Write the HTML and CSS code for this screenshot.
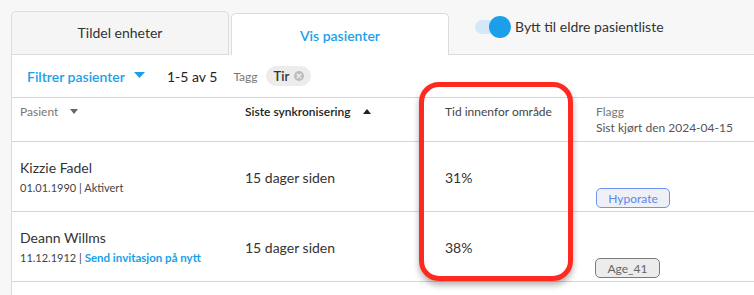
FILE: index.html
```html
<!DOCTYPE html>
<html lang="no">
<head>
<meta charset="utf-8">
<link rel="stylesheet" href="styles.css">
</head>
<body>
<div class="page">
  <div class="tabs">
    <div class="tab tab-idle">Tildel enheter</div>
    <div class="tab tab-active">Vis pasienter</div>
    <div class="tab-rest">
      <span class="toggle"><span class="track"></span><span class="knob"></span></span>
      <span class="toggle-label">Bytt til eldre pasientliste</span>
    </div>
  </div>
  <div class="panel">
    <div class="filters">
      <span class="filter-btn">Filtrer pasienter</span>
      <svg class="caret-blue" width="11" height="6" viewBox="0 0 11 6"><path d="M0 0H11L5.5 6Z" fill="#1a9fe8"/></svg>
      <span class="count">1-5 av 5</span>
      <span class="tag-label">Tagg</span>
      <span class="chip">Tir
        <svg class="chip-x" width="10" height="10" viewBox="0 0 10 10"><circle cx="5" cy="5" r="5" fill="#bdbdbd"/><path d="M3.2 3.2L6.8 6.8M6.8 3.2L3.2 6.8" stroke="#f2f2f2" stroke-width="1.4" stroke-linecap="round"/></svg>
      </span>
    </div>
    <div class="row head">
      <div class="cell h-gray">Pasient<svg class="sort" width="8" height="5" viewBox="0 0 8 5"><path d="M0 0H8L4 5Z" fill="#666"/></svg></div>
      <div class="cell h-bold">Siste synkronisering<svg class="sort" width="8" height="5" viewBox="0 0 8 5"><path d="M0 5H8L4 0Z" fill="#222"/></svg></div>
      <div class="cell h-dark">Tid innenfor område</div>
      <div class="cell h-flag"><div class="h-gray">Flagg</div><div class="h-sub">Sist kjørt den 2024-04-15</div></div>
    </div>
    <div class="row body-row">
      <div class="cell patient"><div class="name">Kizzie Fadel</div><div class="meta">01.01.1990 | Aktivert</div></div>
      <div class="cell val">15 dager siden</div>
      <div class="cell val">31%</div>
      <div class="cell flag"><span class="badge badge-blue">Hyporate</span></div>
    </div>
    <div class="row body-row">
      <div class="cell patient"><div class="name">Deann Willms</div><div class="meta">11.12.1912 | <span class="link">Send invitasjon på nytt</span></div></div>
      <div class="cell val">15 dager siden</div>
      <div class="cell val">38%</div>
      <div class="cell flag"><span class="badge badge-gray">Age_41</span></div>
    </div>
  </div>
</div>
<div class="highlight"></div>
</body>
</html>
```

FILE: styles.css
```css
html, body {
  margin: 0;
  padding: 0;
}
body {
  background: #f7f7f7;
  font-family: Lato, "Liberation Sans", sans-serif;
  color: #333;
  width: 754px;
  height: 295px;
  overflow: hidden;
  position: relative;
}
.page {
  padding: 11px 0 0 11px;
  height: 295px;
  box-sizing: border-box;
  display: flex;
  flex-direction: column;
}
.tabs {
  display: flex;
  align-items: flex-end;
  height: 44px;
  flex: none;
}
.tab {
  box-sizing: border-box;
  width: 218px;
  display: flex;
  align-items: center;
  justify-content: center;
  font-size: 14px;
  border: 1px solid #dcdcdc;
  border-radius: 5px 5px 0 0;
}
.tab-idle {
  height: 44px;
  background: #f5f5f5;
  color: #333;
  padding-bottom: 1px;
}
.tab-active {
  height: 42px;
  margin-left: 2px;
  background: #fff;
  border-bottom: none;
  color: #1a9fe8;
  font-weight: 600;
  padding-top: 2px;
}
.tab-rest {
  flex: 1;
  align-self: stretch;
  border-bottom: 1px solid #dcdcdc;
  display: flex;
  align-items: flex-start;
  padding-left: 26px;
  padding-top: 5px;
}
.toggle {
  position: relative;
  width: 36px;
  height: 22px;
  display: inline-block;
}
.track {
  position: absolute;
  left: 0;
  top: 4px;
  width: 34px;
  height: 14px;
  border-radius: 7px;
  background: #d3e9f8;
}
.knob {
  position: absolute;
  left: 14px;
  top: 0;
  width: 22px;
  height: 22px;
  border-radius: 50%;
  background: #1a9fe8;
}
.toggle-label {
  font-size: 14px;
  color: #333;
  margin-left: 4px;
  line-height: 22px;
}
.panel {
  flex: 1;
  background: #fff;
  border-left: 1px solid #dcdcdc;
}
.filters {
  height: 42px;
  display: flex;
  align-items: center;
  padding-left: 15px;
  border-bottom: 1px solid #d5d5d5;
}
.filter-btn {
  color: #1a9fe8;
  font-size: 14px;
  font-weight: 600;
}
.caret-blue {
  margin-left: 9px;
  margin-bottom: 2px;
}
.count {
  font-size: 14px;
  color: #222;
  margin-left: 22px;
}
.tag-label {
  font-size: 12px;
  color: #777;
  margin-left: 16px;
}
.chip {
  margin-left: 8px;
  height: 20px;
  background: #ececec;
  border-radius: 10px;
  display: inline-flex;
  align-items: center;
  padding: 0 7px 0 8px;
  font-size: 13px;
  font-weight: 600;
  color: #333;
  gap: 5px;
}
.row {
  display: grid;
  grid-template-columns: 225px 200px 151px 1fr;
  padding-left: 8px;
  border-bottom: 1px solid #d5d5d5;
}
.head {
  height: 43px;
  font-size: 12px;
}
.head .cell {
  padding-top: 6px;
}
.h-gray {
  color: #777;
}
.h-bold {
  font-weight: 600;
  color: #222;
}
.h-dark {
  color: #444;
}
.h-sub {
  color: #555;
  margin-top: 1px;
  font-size: 12px;
}
.sort {
  margin-left: 12px;
  margin-bottom: 2px;
}
.body-row {
  height: 69px;
  align-items: center;
}
.name {
  font-size: 14px;
  color: #333;
}
.meta {
  font-size: 11px;
  color: #444;
  margin-top: 5px;
}
.link {
  color: #1a9fe8;
  font-weight: 700;
  font-size: 11.5px;
}
.val {
  font-size: 14px;
  color: #333;
  padding-top: 2px;
}
.flag {
  align-self: end;
  padding-bottom: 3px;
}
.badge {
  display: inline-flex;
  align-items: center;
  justify-content: center;
  box-sizing: border-box;
  height: 20px;
  border-radius: 5px;
  font-size: 12px;
  padding: 0 11px;
}
.badge-blue {
  border: 1px solid #6b95ee;
  background: #eef0f6;
  color: #5b88ea;
  width: 74px;
}
.badge-gray {
  border: 1px solid #7a7a7a;
  background: #ececec;
  color: #666;
  width: 65px;
  margin-left: -1px;
}
.highlight {
  position: absolute;
  left: 419px;
  top: 82px;
  width: 154px;
  height: 199px;
  box-sizing: border-box;
  border: 5px solid #ff2a1f;
  border-radius: 20px;
  box-shadow: 0 4px 6px rgba(0, 0, 0, 0.3);
}
```
